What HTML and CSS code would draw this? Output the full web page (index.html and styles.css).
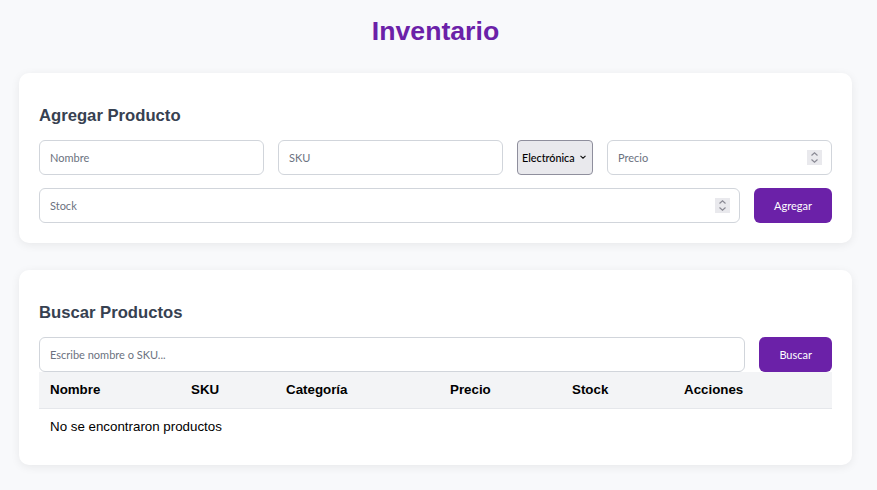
FILE: index.html
```html
<!DOCTYPE html>
<html lang="es">
<head>
<meta charset="utf-8">
<title>Inventario</title>
<link rel="stylesheet" href="styles.css">
</head>
<body>
<div class="app">
  <h1 class="title">Inventario</h1>

  <section class="card">
    <h2 class="card-title">Agregar Producto</h2>
    <form class="product-form">
      <input class="field grow" type="text" placeholder="Nombre">
      <input class="field grow" type="text" placeholder="SKU">
      <select class="select">
        <option>Electrónica</option>
        <option>Ropa</option>
        <option>Hogar</option>
      </select>
      <div class="num-field grow">
        <input class="field num" type="number" placeholder="Precio">
        <span class="spin"><svg viewBox="0 0 15 15" width="15" height="15"><rect width="15" height="15" fill="#e9e9ed"/><path d="M4.5 5.5 L7.5 2.8 L10.5 5.5" fill="none" stroke="#8a8a94" stroke-width="1.2"/><path d="M4.5 9.5 L7.5 12.2 L10.5 9.5" fill="none" stroke="#8a8a94" stroke-width="1.2"/></svg></span>
      </div>
      <div class="num-field grow">
        <input class="field num" type="number" placeholder="Stock">
        <span class="spin"><svg viewBox="0 0 15 15" width="15" height="15"><rect width="15" height="15" fill="#e9e9ed"/><path d="M4.5 5.5 L7.5 2.8 L10.5 5.5" fill="none" stroke="#8a8a94" stroke-width="1.2"/><path d="M4.5 9.5 L7.5 12.2 L10.5 9.5" fill="none" stroke="#8a8a94" stroke-width="1.2"/></svg></span>
      </div>
      <button class="btn" type="button">Agregar</button>
    </form>
  </section>

  <section class="card">
    <h2 class="card-title">Buscar Productos</h2>
    <div class="search-row">
      <input class="field search-input" type="text" placeholder="Escribe nombre o SKU...">
      <button class="btn" type="button">Buscar</button>
    </div>
    <table class="products">
      <colgroup>
        <col class="c1"><col class="c2"><col class="c3"><col class="c4"><col class="c5"><col>
      </colgroup>
      <thead>
        <tr>
          <th>Nombre</th>
          <th>SKU</th>
          <th>Categoría</th>
          <th>Precio</th>
          <th>Stock</th>
          <th>Acciones</th>
        </tr>
      </thead>
      <tbody>
        <tr><td colspan="6">No se encontraron productos</td></tr>
      </tbody>
    </table>
  </section>
</div>
</body>
</html>
```

FILE: styles.css
```css
body {
  margin: 0;
  background: #f8f9fb;
  font-family: "Liberation Sans", Arial, sans-serif;
  font-size: 13.33px;
  color: #000;
}

.app {
  width: 833px;
  margin-left: 19px;
}

.title {
  text-align: center;
  color: #6b21a8;
  font-size: 26.67px;
  font-weight: bold;
  margin: 16px 0 26.4px;
}

.card {
  background: #fff;
  border-radius: 10px;
  box-shadow: 0 2px 10px rgba(0, 0, 0, 0.07);
  padding: 20px;
  margin-bottom: 27px;
}

.card-title {
  font-size: 16.67px;
  font-weight: bold;
  color: #374151;
  margin: 12.8px 0 13.8px;
}

.product-form {
  display: flex;
  flex-wrap: wrap;
  gap: 13px 14px;
  margin: 0;
}

.field {
  box-sizing: border-box;
  height: 35px;
  border: 1px solid #d1d5db;
  border-radius: 6px;
  padding: 0 10px;
  font-family: Lato, "Liberation Sans", sans-serif;
  font-size: 11px;
  color: #111;
  background: #fff;
  outline: none;
}

.field::placeholder {
  color: #6b7280;
}

.grow {
  flex: 1 1 200px;
  min-width: 0;
}

.num-field {
  position: relative;
  display: flex;
}

.num-field .field {
  width: 100%;
}

.num {
  -moz-appearance: textfield;
}

.num::-webkit-inner-spin-button,
.num::-webkit-outer-spin-button {
  -webkit-appearance: none;
  margin: 0;
}

.spin {
  position: absolute;
  right: 10px;
  top: 10px;
  width: 15px;
  height: 15px;
  display: block;
}

.spin svg {
  display: block;
}

.select {
  flex: 0 0 76px;
  width: 76px;
  box-sizing: border-box;
  height: 35px;
  -webkit-appearance: none;
  appearance: none;
  background: #e9e9ed url("data:image/svg+xml;utf8,<svg xmlns='http://www.w3.org/2000/svg' width='6' height='4' viewBox='0 0 6 4'><path d='M0.5 0.8 L3 3.2 L5.5 0.8' fill='none' stroke='%23111' stroke-width='1.1'/></svg>") no-repeat right 6px center;
  border: 1px solid #8f8f9d;
  border-radius: 4px;
  padding: 0 14px 0 4px;
  font-family: Lato, "Liberation Sans", sans-serif;
  font-size: 10.8px;
  font-weight: 500;
  color: #000;
}

.btn {
  flex: 0 0 auto;
  height: 35px;
  padding: 0 20px;
  border: 0;
  border-radius: 6px;
  background: #6b21a8;
  color: #fff;
  font-family: Lato, "Liberation Sans", sans-serif;
  font-size: 11px;
  cursor: pointer;
}

.search-row {
  display: flex;
  gap: 14px;
}

.search-input {
  flex: 1 1 auto;
  min-width: 0;
}

.products {
  width: 100%;
  border-collapse: collapse;
  table-layout: fixed;
}

.products .c1 { width: 141px; }
.products .c2 { width: 95px; }
.products .c3 { width: 164px; }
.products .c4 { width: 122px; }
.products .c5 { width: 112px; }

.products th {
  text-align: left;
  padding: 10.5px 10px 10.5px 11px;
  background: #f3f4f6;
  border-bottom: 1px solid #e5e7eb;
  font-weight: bold;
  color: #000;
}

.products td {
  padding: 10.5px 10px 11px 11px;
  color: #000;
}
```
